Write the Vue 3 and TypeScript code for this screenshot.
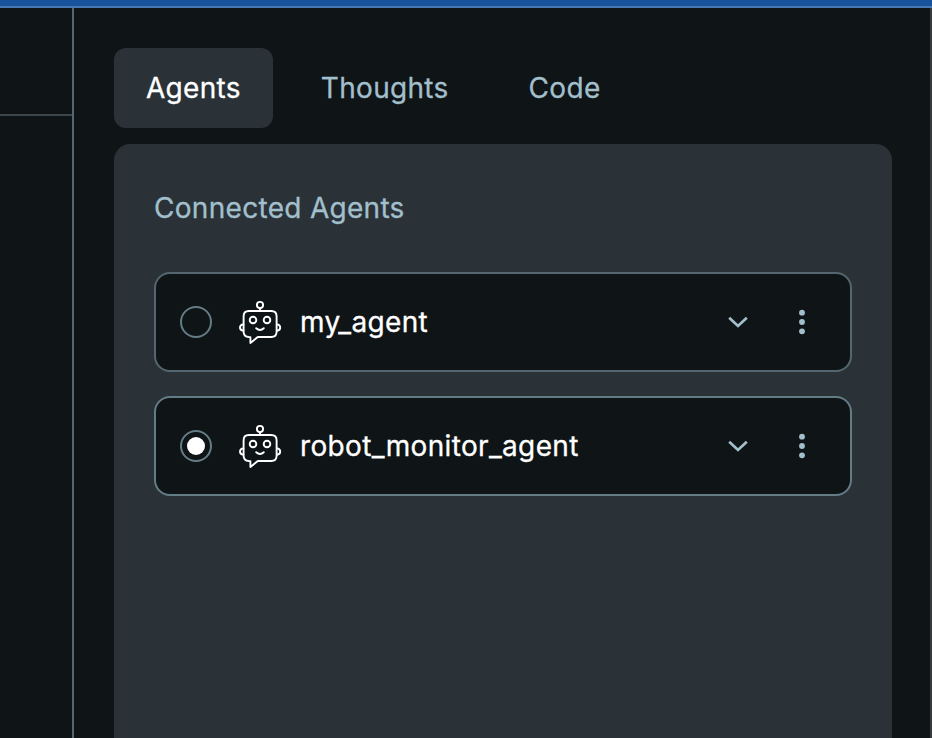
<script setup lang="ts">
import { ref } from 'vue'

interface Agent {
  id: string
  name: string
}

const tabs: string[] = ['Agents', 'Thoughts', 'Code']
const activeTab = ref<string>('Agents')

const agents: Agent[] = [
  { id: 'my', name: 'my_agent' },
  { id: 'monitor', name: 'robot_monitor_agent' },
]
const selected = ref<string>('monitor')
</script>

<template>
  <div class="window">
    <div class="topbar"></div>
    <div class="body">
      <aside class="sidebar">
        <div class="sidebar-head"></div>
      </aside>
      <main class="content">
        <nav class="tabs">
          <button
            v-for="tab in tabs"
            :key="tab"
            type="button"
            class="tab"
            :class="{ active: tab === activeTab }"
            @click="activeTab = tab"
          >{{ tab }}</button>
        </nav>
        <section class="panel">
          <h2 class="title">Connected Agents</h2>
          <div class="list">
            <div
              v-for="agent in agents"
              :key="agent.id"
              class="card"
              :class="{ selected: agent.id === selected }"
              @click="selected = agent.id"
            >
              <span class="radio"><span v-if="agent.id === selected" class="dot"></span></span>
              <svg class="bot" viewBox="0 0 48 48" width="48" height="48" fill="none" stroke="#fff" stroke-width="1.9" stroke-linejoin="round" stroke-linecap="round">
                <circle cx="24" cy="7" r="3.1" />
                <path d="M24 10.2V13" />
                <path d="M12.8 13H35.2Q40.6 13 40.6 18.3V33.7Q40.6 39 35.2 39H21.8L14.4 44.9V39.2Q13.8 39 12.8 39Q7.6 38.6 7.6 33.7V18.3Q7.6 13 12.8 13Z" />
                <path d="M7.4 26.4Q4 26.6 4 29.6T7.4 32.8M41 26.4Q44.2 26.6 44.2 29.6T41 32.8" />
                <circle cx="17" cy="22" r="3.3" />
                <circle cx="31" cy="22" r="3.3" />
                <path d="M20.2 30.2Q24 33.8 27.8 30.2" />
              </svg>
              <span class="name">{{ agent.name }}</span>
              <svg class="chevron" viewBox="0 0 32 32" width="32" height="32" fill="none" stroke="#a2bfcc" stroke-width="2.7">
                <path d="M7.2 11.7L16 20L24.8 11.7" />
              </svg>
              <svg class="more" viewBox="0 0 32 32" width="32" height="32" fill="#a2bfcc">
                <circle cx="16" cy="6.7" r="2.9" />
                <circle cx="16" cy="16" r="2.9" />
                <circle cx="16" cy="25.3" r="2.9" />
              </svg>
            </div>
          </div>
        </section>
      </main>
    </div>
  </div>
</template>

<style>
body {
  background: #0f1416;
  overflow: hidden;
}
</style>

<style scoped>
.window {
  box-sizing: border-box;
  width: 932px;
  height: 738px;
  display: flex;
  flex-direction: column;
  overflow: hidden;
  background: #0f1416;
  font-family: Inter, "Liberation Sans", sans-serif;
  font-size: 28px;
  font-weight: 400;
  letter-spacing: 0.3px;
  line-height: 40px;
  -webkit-text-stroke: 0.3px currentColor;
}

.topbar {
  box-sizing: border-box;
  flex: none;
  height: 8px;
  background: #18549e;
  border-bottom: 2px solid #4679b5;
}

.body {
  flex: 1;
  display: flex;
  min-height: 0;
  border-right: 2px solid #373b3d;
}

.sidebar {
  width: 72px;
  border-right: 2px solid #546770;
}

.sidebar-head {
  height: 106px;
  border-bottom: 2px solid #3c474d;
}

.content {
  flex: 1;
  display: flex;
  flex-direction: column;
  padding: 40px 38px 0 40px;
}

.tabs {
  display: flex;
  gap: 16px;
  margin-bottom: 16px;
}

.tab {
  height: 80px;
  padding: 0 32px;
  border: 0;
  border-radius: 12px;
  background: transparent;
  color: #a2bfcc;
  font: inherit;
  letter-spacing: inherit;
}

.tab.active {
  background: #2a3238;
  color: #fff;
}

.panel {
  flex: 1;
  padding: 44px 40px 0;
  border-radius: 16px 16px 0 0;
  background: #2a3238;
}

.title {
  margin: 0 0 44px;
  color: #a2bfcc;
  font-size: 28px;
  font-weight: inherit;
}

.list {
  display: flex;
  flex-direction: column;
  gap: 24px;
}

.card {
  box-sizing: border-box;
  height: 100px;
  display: flex;
  align-items: center;
  padding: 0 32px 0 24px;
  border: 2px solid #546770;
  border-radius: 16px;
  background: #0f1416;
  color: #fff;
}

.card.selected {
  border-color: #647c86;
}

.radio {
  box-sizing: border-box;
  width: 32px;
  height: 32px;
  display: grid;
  place-items: center;
  border: 2px solid #647c86;
  border-radius: 50%;
}

.dot {
  width: 18px;
  height: 18px;
  border-radius: 50%;
  background: #fff;
}

.bot {
  margin: 0 16px 0 24px;
}

.name {
  flex: 1;
  letter-spacing: 0.34px;
}

.more {
  margin-left: 32px;
}
</style>
